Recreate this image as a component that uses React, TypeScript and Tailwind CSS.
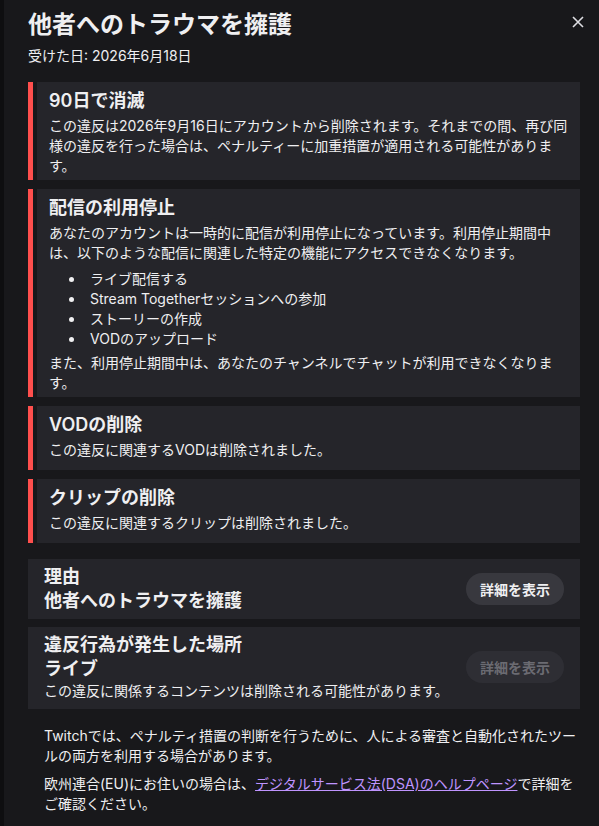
import React from 'react';

interface PenaltyCardProps {
  title: string;
  children: React.ReactNode;
  tall?: boolean;
}

const PenaltyCard: React.FC<PenaltyCardProps> = ({ title, children, tall }) => (
  <div className="flex gap-[4px]">
    <div className="w-[5px] shrink-0 bg-[#ff4f4d]" />
    <div className={`flex-1 bg-[#25252a] pl-3 pr-[4px] pt-[8px] ${tall ? 'pb-[10px]' : 'pb-[4px]'}`}>
      <h3 className="text-[18px] font-semibold leading-[22px]">{title}</h3>
      <div className="mt-[4px] text-[14px] leading-[20px]">{children}</div>
    </div>
  </div>
);

interface InfoCardProps {
  label: string;
  value: string;
  note?: string;
  disabled?: boolean;
}

const InfoCard: React.FC<InfoCardProps> = ({ label, value, note, disabled }) => (
  <div className={`flex items-center justify-between bg-[#25252a] pl-4 pr-4 pt-[6px] ${note ? 'pb-[8px]' : 'pb-[6px]'}`}>
    <div>
      <div className="text-[18px] font-semibold leading-[24px]">{label}</div>
      <div className="text-[18px] font-semibold leading-[24px]">{value}</div>
      {note && <div className="text-[14px] leading-[20px]">{note}</div>}
    </div>
    <button
      className={`flex h-8 items-center rounded-full px-[14px] text-[14px] font-semibold ${
        disabled ? 'bg-[#2e2e34] text-[#6b6b72]' : 'bg-[#38383e] text-[#efeff1]'
      }`}
    >
      詳細を表示
    </button>
  </div>
);

export default function App() {
  const bullets = ['ライブ配信する', 'Stream Togetherセッションへの参加', 'ストーリーの作成', 'VODのアップロード'];

  return (
    <div
      lang="ja"
      className="flex min-h-screen bg-[#18181b] font-['Inter','Noto_Sans_CJK_JP',sans-serif] text-[#efeff1]"
    >
      <div className="w-[4px] shrink-0 bg-[#0e0e10]" />

      <div className="relative flex-1 pl-6 pr-[19px] pt-[10px] pb-6">
        {/* Close */}
        <button className="absolute right-[15px] top-[16px] text-[#dedee3]">
          <svg width="12" height="12" viewBox="0 0 12 12" fill="none" stroke="currentColor" strokeWidth="1.6">
            <path d="M1 1L11 11M11 1L1 11" />
          </svg>
        </button>

        {/* Header */}
        <h2 className="text-[24px] font-semibold leading-[30px]">他者へのトラウマを擁護</h2>
        <p className="mt-[7px] text-[14px] leading-[18px]">受けた日: 2026年6月18日</p>

        <div className="mt-[17px] flex flex-col gap-[9px]">
          <PenaltyCard title="90日で消滅">
            この違反は2026年9月16日にアカウントから削除されます。それまでの間、再び同様の違反を行った場合は、ペナルティーに加重措置が適用される可能性があります。
          </PenaltyCard>

          <PenaltyCard title="配信の利用停止">
            <p>
              あなたのアカウントは一時的に配信が利用停止になっています。利用停止期間中は、以下のような配信に関連した特定の機能にアクセスできなくなります。
            </p>
            <ul className="mt-[6px] list-disc pl-[36px]">
              {bullets.map((item) => (
                <li key={item} className="pl-[5px]">
                  {item}
                </li>
              ))}
            </ul>
            <p className="mt-[4px]">また、利用停止期間中は、あなたのチャンネルでチャットが利用できなくなります。</p>
          </PenaltyCard>

          <PenaltyCard title="VODの削除" tall>
            この違反に関連するVODは削除されました。
          </PenaltyCard>

          <PenaltyCard title="クリップの削除" tall>
            この違反に関連するクリップは削除されました。
          </PenaltyCard>
        </div>

        <div className="mt-4 flex flex-col gap-2">
          <InfoCard label="理由" value="他者へのトラウマを擁護" />
          <InfoCard
            label="違反行為が発生した場所"
            value="ライブ"
            note="この違反に関係するコンテンツは削除される可能性があります。"
            disabled
          />
        </div>

        {/* Footer */}
        <div className="mt-[17px] pl-4 text-[14px] leading-[20px]">
          <p>Twitchでは、ペナルティ措置の判断を行うために、人による審査と自動化されたツールの両方を利用する場合があります。</p>
          <p className="mt-2">
            欧州連合(EU)にお住いの場合は、
            <a href="#dsa" className="text-[#bf94ff] underline">
              デジタルサービス法(DSA)のヘルプページ
            </a>
            で詳細をご確認ください。
          </p>
        </div>
      </div>
    </div>
  );
}
